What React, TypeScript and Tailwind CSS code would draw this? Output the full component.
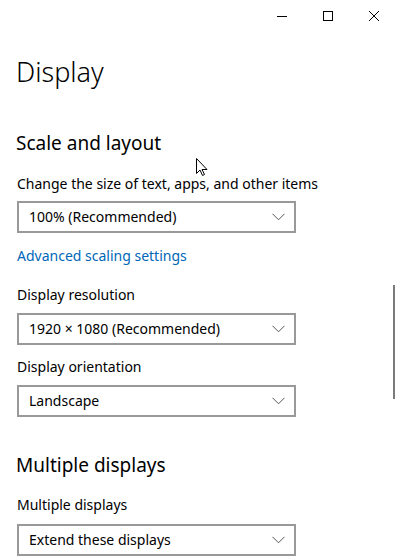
import React from "react";

const font = { fontFamily: '"Noto Sans", "Open Sans", sans-serif' };

function Chevron() {
  return (
    <svg width="13" height="8" viewBox="0 0 13 8" className="shrink-0">
      <path d="M0.5 0.8 L6.5 6.8 L12.5 0.8" fill="none" stroke="#555" strokeWidth="1" />
    </svg>
  );
}

function Select({ value }: { value: string }) {
  return (
    <div className="flex h-[32px] w-[279px] items-center justify-between border-2 border-[#999999] bg-white pl-[10px] pr-[9px]">
      <span className="text-[14px] leading-none text-black">{value}</span>
      <Chevron />
    </div>
  );
}

export default function App() {
  return (
    <div className="relative h-[560px] w-[397px] overflow-hidden bg-white text-black" style={font}>
      <div className="flex h-[32px] justify-end">
        <div className="flex w-[46px] items-center justify-center">
          <svg width="10" height="10" viewBox="0 0 10 10">
            <path d="M0 5.5 H10" stroke="#000" strokeWidth="1" />
          </svg>
        </div>
        <div className="flex w-[46px] items-center justify-center">
          <svg width="10" height="10" viewBox="0 0 10 10">
            <rect x="0.5" y="0.5" width="9" height="9" fill="none" stroke="#000" strokeWidth="1" />
          </svg>
        </div>
        <div className="flex w-[46px] items-center justify-center">
          <svg width="10" height="10" viewBox="0 0 10 10">
            <path d="M0 0 L10 10 M10 0 L0 10" stroke="#000" strokeWidth="1" />
          </svg>
        </div>
      </div>
      <div className="flex">
        <div className="flex-1 pl-[16px]">
          <h1 className="mt-[22px] text-[27px] font-light leading-[36px]">Display</h1>
          <h2 className="mt-[39px] text-[19px] font-normal leading-[28px]">Scale and layout</h2>
          <div className="pl-[1px]">
            <p className="mt-[17px] text-[14px] leading-[20px]">Change the size of text, apps, and other items</p>
            <div className="mt-[7px]"><Select value="100% (Recommended)" /></div>
            <p className="mt-[13px] text-[14px] leading-[20px] text-[#0067b8]">Advanced scaling settings</p>
            <p className="mt-[19px] text-[14px] leading-[20px]">Display resolution</p>
            <div className="mt-[8px]"><Select value="1920 × 1080 (Recommended)" /></div>
            <p className="mt-[12px] text-[14px] leading-[20px]">Display orientation</p>
            <div className="mt-[8px]"><Select value="Landscape" /></div>
          </div>
          <h2 className="mt-[34px] text-[19px] font-normal leading-[28px]">Multiple displays</h2>
          <div className="pl-[1px]">
            <p className="mt-[16px] text-[14px] leading-[20px]">Multiple displays</p>
            <div className="mt-[9px]"><Select value="Extend these displays" /></div>
          </div>
        </div>
        <div className="relative w-[4px]">
          <div className="absolute left-0 top-[253px] h-[114px] w-[2px] bg-[#7a7a7a]" />
        </div>
      </div>
      <svg className="absolute left-[196px] top-[158px]" width="12" height="19" viewBox="0 0 12 19">
        <path d="M0.5 0.5 L0.5 15.5 L4 12 L6.5 17.5 L8.5 16.5 L6 11.5 L11 11.5 Z" fill="#fff" stroke="#000" strokeWidth="1" strokeLinejoin="miter" />
      </svg>
    </div>
  );
}
